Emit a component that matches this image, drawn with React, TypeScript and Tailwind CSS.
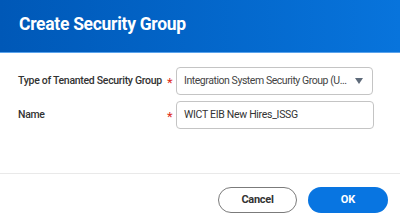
import React from 'react';

const font = {fontFamily: 'Roboto, "Liberation Sans", sans-serif'};

const Field = ({label, children}: {label: string; children: React.ReactNode}) => (
  <div className="flex items-center h-[28px]">
    <div className="w-[149px] text-[10.5px] font-medium tracking-[-0.3px] text-[#333333] whitespace-nowrap">{label}</div>
    <div className="w-[9px] text-[13px] text-[#de2e21] leading-none pt-[3px]">*</div>
    {children}
  </div>
);

export default function App() {
  return (
    <div className="w-[400px] h-[220px] bg-white flex flex-col overflow-hidden" style={font}>
      <div className="h-[53px] bg-gradient-to-r from-[#0058b7] to-[#0874dc] border-b border-[#5aa3ec] flex items-center pl-[19px]">
        <h1 className="text-[17.5px] font-bold tracking-[-0.3px] text-white -mt-[3px]">Create Security Group</h1>
      </div>
      <div className="flex flex-col gap-[6px] pt-[14px] pl-[18px] h-[120px]">
        <Field label="Type of Tenanted Security Group">
          <div className="w-[197px] h-[28px] border border-[#c4c4c4] rounded-[4px] flex items-center pl-[7px] pr-[9px] text-[10.5px] tracking-[-0.45px] text-[#444444]">
            <span className="flex-1 whitespace-nowrap overflow-hidden">Integration System Security Group (U...</span>
            <svg width="8" height="6" viewBox="0 0 8 6" className="ml-[4px]">
              <path d="M0 0 L8 0 L4 6 Z" fill="#5f6b7a" />
            </svg>
          </div>
        </Field>
        <Field label="Name">
          <div className="w-[198px] h-[28px] border border-[#c4c4c4] rounded-[4px] flex items-center pl-[7px] text-[10.5px] tracking-[-0.3px] text-[#333333]">
            WICT EIB New Hires_ISSG
          </div>
        </Field>
      </div>
      <div className="border-t border-[#e9e9e9] flex-1 flex items-start justify-end gap-[11px] pt-[13px] pr-[12px]">
        <button className="w-[79px] h-[26px] rounded-full border border-[#7b7b7b] text-[11px] font-bold tracking-[-0.3px] text-[#333333]">
          Cancel
        </button>
        <button className="w-[80px] h-[26px] rounded-full bg-[#0875e1] text-[11px] font-bold text-white">
          OK
        </button>
      </div>
    </div>
  );
}
